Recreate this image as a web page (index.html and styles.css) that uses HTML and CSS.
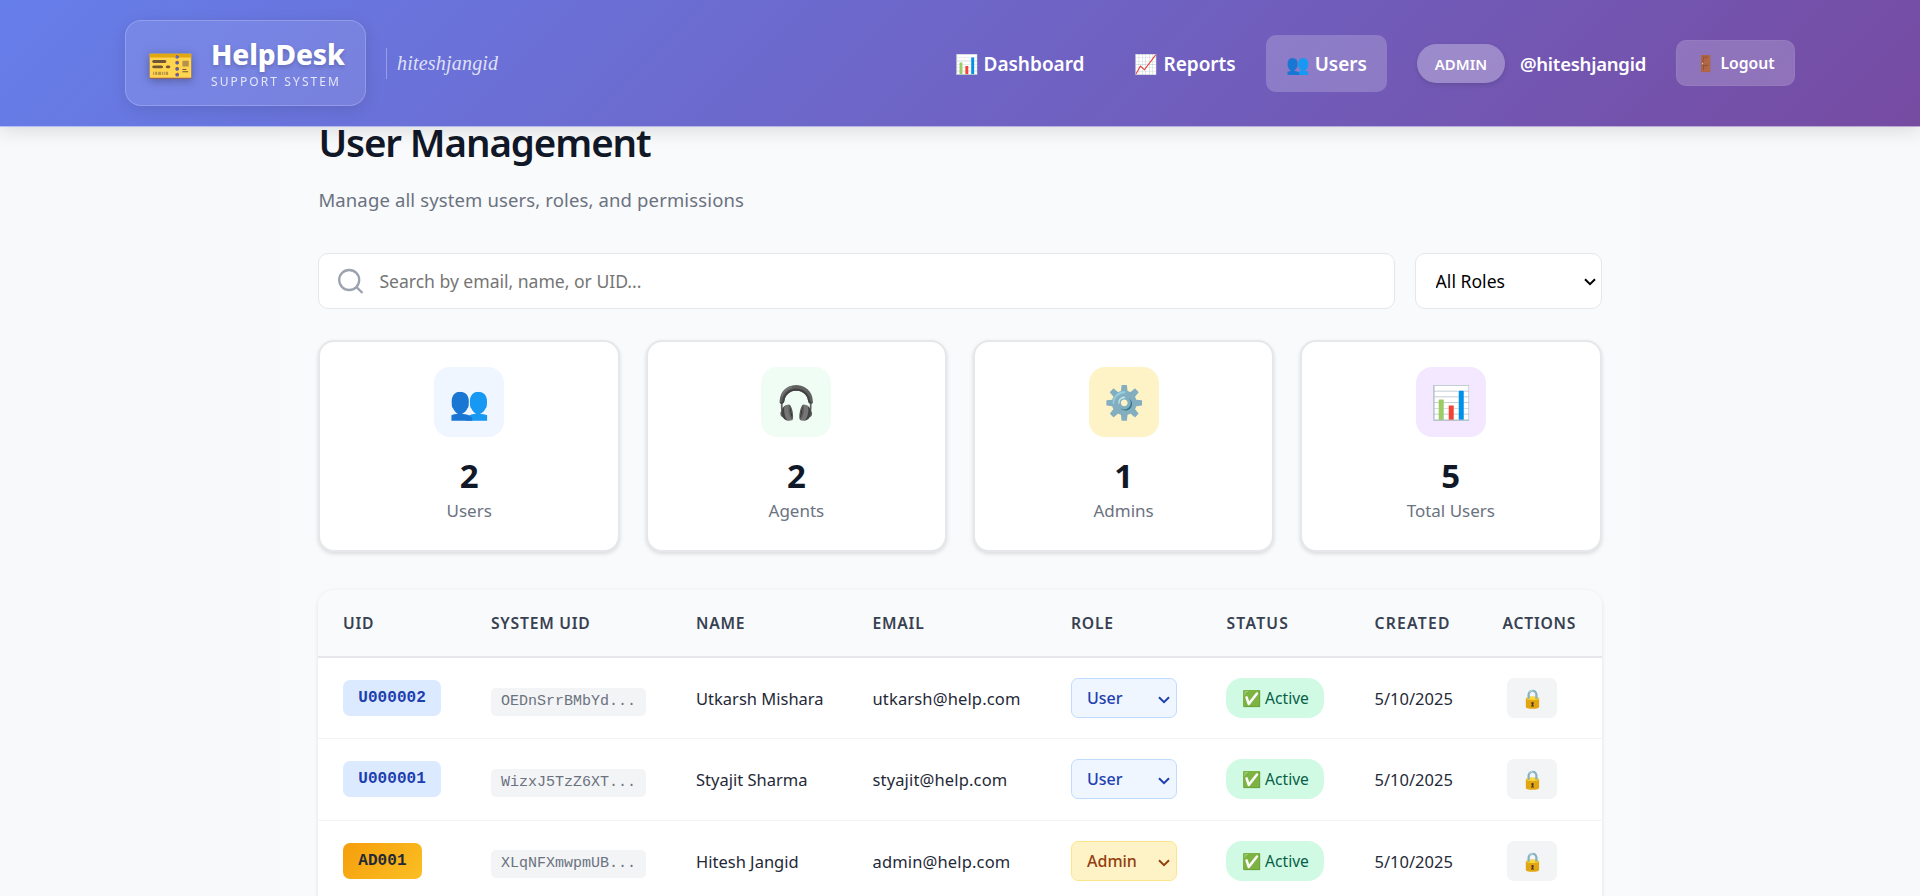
FILE: index.html
```html
<!DOCTYPE html>
<html lang="en">
<head>
<meta charset="utf-8">
<title>HelpDesk - User Management</title>
<link rel="stylesheet" href="styles.css">
</head>
<body>
<header class="header">
  <div class="brand">
    <div class="logo">
      <span class="logo-icon">🎫</span>
      <div class="logo-text"><span class="logo-name">HelpDesk</span><span class="logo-sub">SUPPORT SYSTEM</span></div>
    </div>
    <span class="author">hiteshjangid</span>
  </div>
  <nav class="nav">
    <a class="nav-link">📊 Dashboard</a>
    <a class="nav-link">📈 Reports</a>
    <a class="nav-link active">👥 Users</a>
  </nav>
  <span class="admin-pill">ADMIN</span>
  <span class="username">@hiteshjangid</span>
  <button class="logout">🚪 <span class="logout-text">Logout</span></button>
</header>
<main class="page">
  <h1 class="title">User Management</h1>
  <p class="subtitle">Manage all system users, roles, and permissions</p>
  <div class="filters">
    <div class="search">
      <svg class="search-icon" viewBox="0 0 26 26" fill="none" stroke="#9ca3af" stroke-width="2.3"><circle cx="11.2" cy="12" r="10"/><path d="M18.5 19.2 24.5 25"/></svg>
      <input class="search-input" type="text" placeholder="Search by email, name, or UID...">
    </div>
    <select class="role-filter"><option>All Roles</option></select>
  </div>
  <section class="stats">
    <div class="card"><div class="card-icon blue">👥</div><div class="card-num">2</div><div class="card-label">Users</div></div>
    <div class="card"><div class="card-icon green">🎧</div><div class="card-num">2</div><div class="card-label">Agents</div></div>
    <div class="card"><div class="card-icon yellow">⚙️</div><div class="card-num">1</div><div class="card-label">Admins</div></div>
    <div class="card"><div class="card-icon purple">📊</div><div class="card-num">5</div><div class="card-label">Total Users</div></div>
  </section>
  <div class="table-wrap">
    <table class="users">
      <colgroup><col class="c1"><col class="c2"><col class="c3"><col class="c4"><col class="c5"><col class="c6"><col class="c7"><col></colgroup>
      <thead><tr><th>UID</th><th>SYSTEM UID</th><th>NAME</th><th>EMAIL</th><th>ROLE</th><th class="wide">STATUS</th><th class="wide">CREATED</th><th>ACTIONS</th></tr></thead>
      <tbody>
        <tr><td><span class="uid">U000002</span></td><td class="sys-cell"><code class="sys">OEDnSrrBMbYd...</code></td><td class="text">Utkarsh Mishara</td><td class="text email">utkarsh@help.com</td><td><select class="role"><option>User</option></select></td><td><span class="status">✅ Active</span></td><td class="text">5/10/2025</td><td><button class="lock">🔒</button></td></tr>
        <tr><td><span class="uid">U000001</span></td><td class="sys-cell"><code class="sys">WizxJ5TzZ6XT...</code></td><td class="text">Styajit Sharma</td><td class="text email">styajit@help.com</td><td><select class="role"><option>User</option></select></td><td><span class="status">✅ Active</span></td><td class="text">5/10/2025</td><td><button class="lock">🔒</button></td></tr>
        <tr><td><span class="uid gold">AD001</span></td><td class="sys-cell"><code class="sys">XLqNFXmwpmUB...</code></td><td class="text">Hitesh Jangid</td><td class="text email">admin@help.com</td><td><select class="role amber"><option>Admin</option></select></td><td><span class="status">✅ Active</span></td><td class="text">5/10/2025</td><td><button class="lock">🔒</button></td></tr>
      </tbody>
    </table>
  </div>
</main>
</body>
</html>
```
FILE: styles.css
```css
* { box-sizing: border-box; }
body { margin: 0; height: 896px; overflow: hidden; background: #f8f9fb; font-family: "Noto Sans", sans-serif; color: #1f2937; }
.header { position: relative; z-index: 2; display: flex; align-items: center; height: 127px; padding: 0 125px; background: linear-gradient(135deg, #667eea 0%, #764ba2 100%); border-bottom: 1px solid rgba(255,255,255,.5); box-shadow: 0 4px 18px rgba(0,0,0,.12); color: #fff; }
.brand { display: flex; align-items: center; flex: 1; }
.logo { display: flex; align-items: center; width: 241px; height: 86px; padding-left: 21px; gap: 17px; border: 1px solid rgba(255,255,255,.2); border-radius: 16px; background: rgba(255,255,255,.1); box-shadow: 0 4px 16px rgba(0,0,0,.1); }
.logo-icon { padding-top: 2px; font-size: 38px; line-height: 48px; filter: drop-shadow(0 2px 4px rgba(0,0,0,.3)); }
.logo-text { display: flex; flex-direction: column; padding-top: 1px; }
.logo-name { font-size: 28px; font-weight: 800; line-height: 34px; letter-spacing: -.1px; text-shadow: 0 2px 4px rgba(0,0,0,.2); }
.logo-sub { padding-top: 2px; font-size: 12px; line-height: 18px; letter-spacing: 2.1px; opacity: .8; }
.author { margin-left: 20px; padding-left: 10px; border-left: 1px solid rgba(255,255,255,.3); font: italic 20px/31px "Liberation Serif", serif; letter-spacing: .2px; color: rgba(255,255,255,.8); }
.nav { display: flex; gap: 10px; }
.nav-link { display: flex; align-items: center; height: 57px; padding: 2px 20px 0; border-radius: 10px; font-size: 19px; font-weight: 600; white-space: pre; }
.active { background: rgba(255,255,255,.2); }
.admin-pill { margin-left: 30px; width: 88px; height: 39px; line-height: 40px; text-align: center; border-radius: 20px; background: rgba(255,255,255,.3); box-shadow: 0 2px 5px rgba(0,0,0,.12); font-size: 15px; font-weight: 600; }
.username { margin-left: 15px; font-size: 18.5px; font-weight: 600; letter-spacing: -.24px; }
.logout { margin-left: 30px; width: 119px; height: 46px; padding: 0; border: 1px solid rgba(255,255,255,.05); border-radius: 10px; background: rgba(255,255,255,.2); color: #fff; font: 600 15.7px "Noto Sans", sans-serif; }
.page { width: 1360px; height: 781px; overflow: hidden; margin: -12px auto 0; padding: 0 38.4px; background: #f9fafc; }
.title { margin: 0; font-size: 38.5px; line-height: 54px; font-weight: 650; letter-spacing: -1.1px; color: #111827; }
.subtitle { margin: 17px 0 0; font-size: 18.5px; line-height: 28px; letter-spacing: .13px; color: #6b7280; }
.filters { display: flex; gap: 20px; margin-top: 39px; height: 56px; }
.search { display: flex; align-items: center; flex: 1; padding-left: 19px; gap: 15px; border: 1.5px solid #e5e7eb; border-radius: 10px; background: #fff; }
.search-icon { width: 26px; height: 26px; }
.search-input { flex: 1; padding: 0; border: 0; outline: 0; background: none; font: 17.6px "Noto Sans", sans-serif; letter-spacing: -.03px; }
.role-filter, .role { appearance: none; background-repeat: no-repeat; }
.role-filter { width: 187px; padding: 0 0 0 20px; border: 1.5px solid #e5e7eb; border-radius: 10px; background-color: #fff; background-image: url("data:image/svg+xml,%3Csvg xmlns='http://www.w3.org/2000/svg' width='12' height='8' fill='none' stroke='%23000' stroke-width='2'%3E%3Cpath d='M1 1.2 6 6.2 11 1.2'/%3E%3C/svg%3E"); background-position: right 5px top 24px; color: #000; font: 17.6px "Noto Sans", sans-serif; }
.stats { display: grid; grid-template-columns: repeat(4, 1fr); gap: 25.6px; margin-top: 31px; }
.card { display: flex; flex-direction: column; align-items: center; height: 212px; padding-top: 25px; border: 2px solid #e5e7eb; border-radius: 16px; background: #fff; box-shadow: 0 2px 4px rgba(0,0,0,.12); }
.card-icon { width: 70px; height: 70px; border-radius: 16px; text-align: center; font-size: 32.5px; line-height: 70px; }
.blue { background: #eff6ff; }
.green { background: #f0fdf4; }
.yellow { background: #fef3c7; }
.purple { background: #f3e8ff; }
.card-num { margin-top: 16px; font-size: 33px; line-height: 45px; font-weight: 700; color: #111827; }
.card-label { font-size: 17px; line-height: 26px; color: #6b7280; }
.table-wrap { height: 330px; margin-top: 38px; border-radius: 16px; overflow: hidden; background: #fff; box-shadow: 0 1px 4px rgba(0,0,0,.1); }
.users { width: 100%; table-layout: fixed; border-collapse: separate; border-spacing: 0; }
.c1 { width: 148px; }
.c2 { width: 205px; }
.c3 { width: 176.5px; }
.c4 { width: 198.5px; }
.c5 { width: 155.5px; }
.c6 { width: 148px; }
.c7 { width: 128px; }
.users th { height: 68px; padding: 0 0 0 24.6px; border-bottom: 2px solid #e5e7eb; background: #f9fafb; text-align: left; font-size: 15.7px; font-weight: 650; letter-spacing: .75px; white-space: nowrap; color: #374151; }
.users .wide { letter-spacing: 1.25px; }
.users td { height: 81.3px; padding: 0 0 0 24.6px; border-bottom: 1px solid #f3f4f6; font-size: 16.5px; white-space: nowrap; }
.users .text { padding-top: 1px; }
.users .sys-cell { padding-top: 6px; }
.users .email { letter-spacing: .15px; }
.uid { display: inline-block; padding: 1px 15.3px; border-radius: 7px; background: #dbeafe; color: #1e40af; font: bold 16px/34px "Liberation Mono", monospace; letter-spacing: .05px; }
.gold { background: linear-gradient(135deg, #f59e0b, #fbbf24); color: #1f2937; }
.sys { display: inline-block; padding: 0 10px; border-radius: 5px; background: #f3f4f6; color: #6b7280; font: 15px/28px "Liberation Mono", monospace; }
.role { display: block; width: 106px; height: 40px; padding: 0 0 0 15px; border: 1px solid #bfdbfe; border-radius: 7px; background-color: #eff6ff; background-image: url("data:image/svg+xml,%3Csvg xmlns='http://www.w3.org/2000/svg' width='12' height='8' fill='none' stroke='%231e40af' stroke-width='2'%3E%3Cpath d='M1 1.2 6 6.2 11 1.2'/%3E%3C/svg%3E"); background-position: right 6px top 17px; color: #1e40af; font: 500 16px "Noto Sans", sans-serif; }
.amber { border-color: #fde68a; background-color: #fef3c7; background-image: url("data:image/svg+xml,%3Csvg xmlns='http://www.w3.org/2000/svg' width='12' height='8' fill='none' stroke='%2392400e' stroke-width='2'%3E%3Cpath d='M1 1.2 6 6.2 11 1.2'/%3E%3C/svg%3E"); color: #92400e; }
.status { display: block; width: 98px; height: 40px; line-height: 41px; text-align: center; border-radius: 16px; background: #d1fae5; color: #065f46; font-size: 15.6px; }
.lock { display: block; width: 50px; height: 40px; margin-left: 5px; padding: 2px 0 0; border: 0; border-radius: 7px; background: #f3f4f6; font-size: 18.5px; }
```
